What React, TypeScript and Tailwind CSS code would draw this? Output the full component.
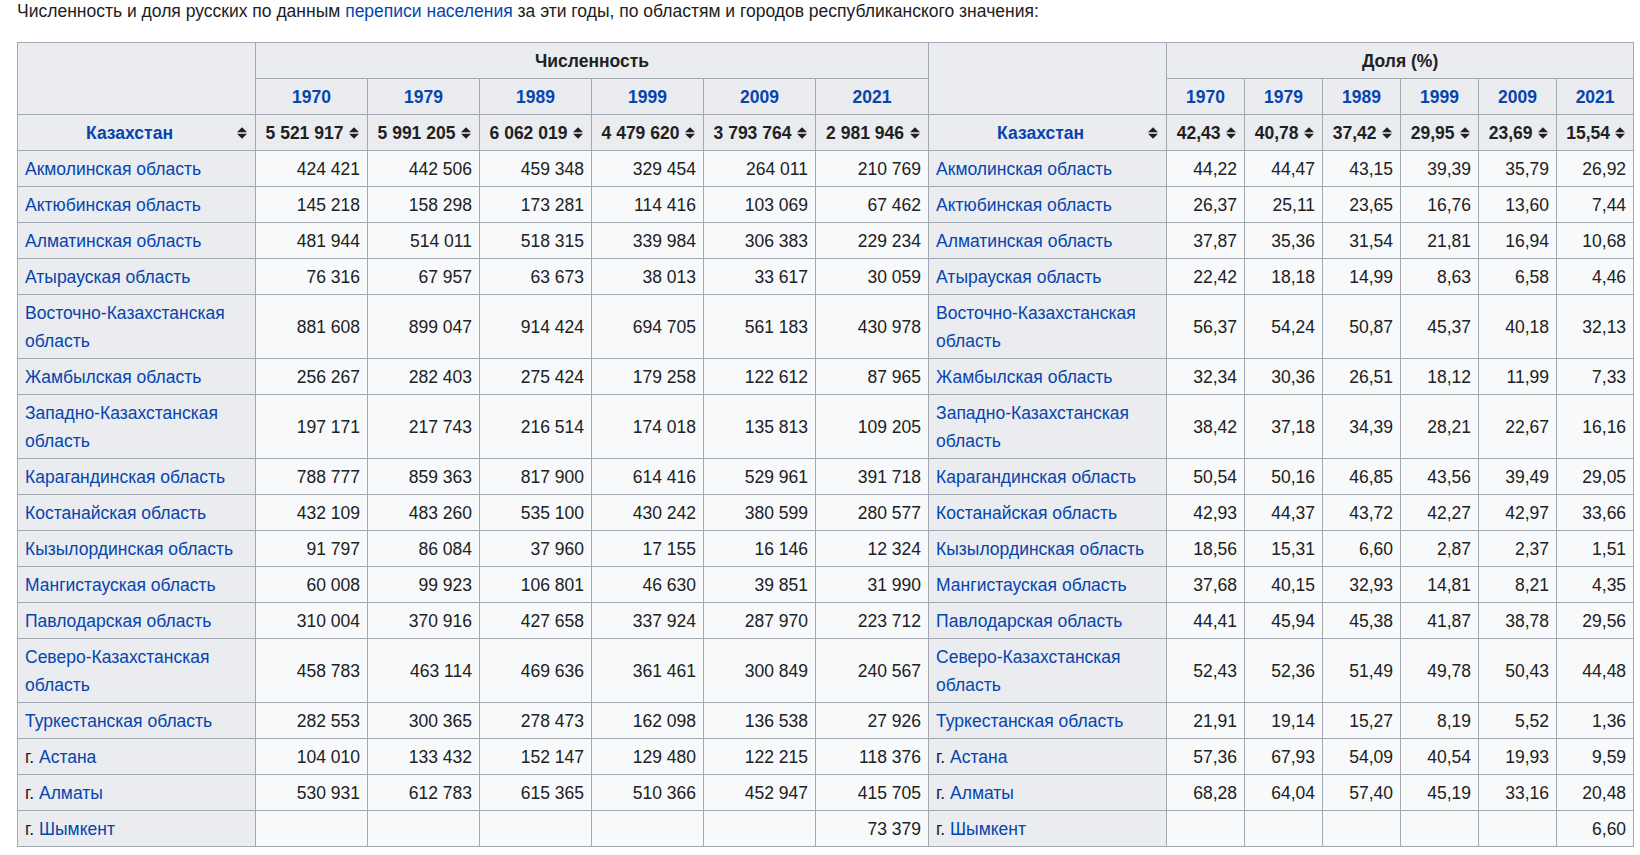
const YEARS = ['1970', '1979', '1989', '1999', '2009', '2021']

const TOTAL_COUNTS = ['5 521 917', '5 991 205', '6 062 019', '4 479 620', '3 793 764', '2 981 946']
const TOTAL_SHARES = ['42,43', '40,78', '37,42', '29,95', '23,69', '15,54']

// column widths, px: name, 6 counts, name, 6 shares
const COUNT_COLS = ['w-[112px]', 'w-[112px]', 'w-[112px]', 'w-[112px]', 'w-[112px]', 'w-[113px]']
const SHARE_COLS = ['w-[78px]', 'w-[78px]', 'w-[78px]', 'w-[78px]', 'w-[78px]', 'w-[77px]']

type Region = {
  prefix?: string
  name: string
  counts: string[]
  shares: string[]
}

const REGIONS: Region[] = [
  { name: 'Акмолинская область', counts: ['424 421', '442 506', '459 348', '329 454', '264 011', '210 769'], shares: ['44,22', '44,47', '43,15', '39,39', '35,79', '26,92'] },
  { name: 'Актюбинская область', counts: ['145 218', '158 298', '173 281', '114 416', '103 069', '67 462'], shares: ['26,37', '25,11', '23,65', '16,76', '13,60', '7,44'] },
  { name: 'Алматинская область', counts: ['481 944', '514 011', '518 315', '339 984', '306 383', '229 234'], shares: ['37,87', '35,36', '31,54', '21,81', '16,94', '10,68'] },
  { name: 'Атырауская область', counts: ['76 316', '67 957', '63 673', '38 013', '33 617', '30 059'], shares: ['22,42', '18,18', '14,99', '8,63', '6,58', '4,46'] },
  { name: 'Восточно-Казахстанская область', counts: ['881 608', '899 047', '914 424', '694 705', '561 183', '430 978'], shares: ['56,37', '54,24', '50,87', '45,37', '40,18', '32,13'] },
  { name: 'Жамбылская область', counts: ['256 267', '282 403', '275 424', '179 258', '122 612', '87 965'], shares: ['32,34', '30,36', '26,51', '18,12', '11,99', '7,33'] },
  { name: 'Западно-Казахстанская область', counts: ['197 171', '217 743', '216 514', '174 018', '135 813', '109 205'], shares: ['38,42', '37,18', '34,39', '28,21', '22,67', '16,16'] },
  { name: 'Карагандинская область', counts: ['788 777', '859 363', '817 900', '614 416', '529 961', '391 718'], shares: ['50,54', '50,16', '46,85', '43,56', '39,49', '29,05'] },
  { name: 'Костанайская область', counts: ['432 109', '483 260', '535 100', '430 242', '380 599', '280 577'], shares: ['42,93', '44,37', '43,72', '42,27', '42,97', '33,66'] },
  { name: 'Кызылординская область', counts: ['91 797', '86 084', '37 960', '17 155', '16 146', '12 324'], shares: ['18,56', '15,31', '6,60', '2,87', '2,37', '1,51'] },
  { name: 'Мангистауская область', counts: ['60 008', '99 923', '106 801', '46 630', '39 851', '31 990'], shares: ['37,68', '40,15', '32,93', '14,81', '8,21', '4,35'] },
  { name: 'Павлодарская область', counts: ['310 004', '370 916', '427 658', '337 924', '287 970', '223 712'], shares: ['44,41', '45,94', '45,38', '41,87', '38,78', '29,56'] },
  { name: 'Северо-Казахстанская область', counts: ['458 783', '463 114', '469 636', '361 461', '300 849', '240 567'], shares: ['52,43', '52,36', '51,49', '49,78', '50,43', '44,48'] },
  { name: 'Туркестанская область', counts: ['282 553', '300 365', '278 473', '162 098', '136 538', '27 926'], shares: ['21,91', '19,14', '15,27', '8,19', '5,52', '1,36'] },
  { prefix: 'г. ', name: 'Астана', counts: ['104 010', '133 432', '152 147', '129 480', '122 215', '118 376'], shares: ['57,36', '67,93', '54,09', '40,54', '19,93', '9,59'] },
  { prefix: 'г. ', name: 'Алматы', counts: ['530 931', '612 783', '615 365', '510 366', '452 947', '415 705'], shares: ['68,28', '64,04', '57,40', '45,19', '33,16', '20,48'] },
  { prefix: 'г. ', name: 'Шымкент', counts: ['', '', '', '', '', '73 379'], shares: ['', '', '', '', '', '6,60'] }
]

// thousands separator is a non-breaking space in the source data
const nb = (value: string) => value.replace(/ /g, '\u00a0')

const CELL = 'border border-[#a2a9b1] px-[7px] py-[3.5px] leading-[28px]'
const HEAD = `${CELL} bg-[#eaecf0] font-bold text-center`

function SortIcon () {
  return (
    <svg width="10" height="12" viewBox="0 0 10 12" className="shrink-0">
      <polygon points="0,5.3 5,0.3 10,5.3" fill="#202122" />
      <polygon points="0,6.7 5,11.7 10,6.7" fill="#202122" />
    </svg>
  )
}

function SortHeader ({ children, link = false }: { children: string, link?: boolean }) {
  return (
    <th className="border border-[#a2a9b1] bg-[#eaecf0] py-[3.5px] pl-[7px] pr-[8px] font-bold leading-[28px]">
      <div className="flex items-center">
        <span className={`flex-1 whitespace-nowrap text-center ${link ? 'text-[#0645ad]' : ''}`}>
          {nb(children)}
        </span>
        <span className="ml-[3px] flex">
          <SortIcon />
        </span>
      </div>
    </th>
  )
}

function RegionName ({ region }: { region: Region }) {
  return (
    <th className={`${CELL} bg-[#eaecf0] text-left font-normal`}>
      {region.prefix}
      <span className="text-[#0645ad]">{region.name}</span>
    </th>
  )
}

function ValueCell ({ value }: { value: string }) {
  return (
    <td className={`${CELL} bg-[#f8f9fa] text-right`}>
      {nb(value)}
    </td>
  )
}

export default function App () {
  return (
    <div className="min-h-[855px] bg-white pl-[17px] font-['Liberation_Sans',Arial,sans-serif] text-[17.5px] text-[#202122]">
      <p className="mb-[20px] leading-[22px]">
        Численность и доля русских по данным{' '}
        <span className="text-[#0645ad]">переписи населения</span>
        {' '}за эти годы, по областям и городов республиканского значения:
      </p>

      <table className="w-[1617px] table-fixed border-collapse">
        <colgroup>
          <col className="w-[238px]" />
          {COUNT_COLS.map((w, i) => <col key={`c${i}`} className={w} />)}
          <col className="w-[238px]" />
          {SHARE_COLS.map((w, i) => <col key={`s${i}`} className={w} />)}
        </colgroup>
        <thead>
          <tr>
            <th rowSpan={2} className={HEAD} />
            <th colSpan={6} className={HEAD}>Численность</th>
            <th rowSpan={2} className={HEAD} />
            <th colSpan={6} className={HEAD}>Доля (%)</th>
          </tr>
          <tr>
            {YEARS.map(y => <th key={`a${y}`} className={`${HEAD} text-[#0645ad]`}>{y}</th>)}
            {YEARS.map(y => <th key={`b${y}`} className={`${HEAD} text-[#0645ad]`}>{y}</th>)}
          </tr>
          <tr>
            <SortHeader link>Казахстан</SortHeader>
            {TOTAL_COUNTS.map(v => <SortHeader key={v}>{v}</SortHeader>)}
            <SortHeader link>Казахстан</SortHeader>
            {TOTAL_SHARES.map(v => <SortHeader key={v}>{v}</SortHeader>)}
          </tr>
        </thead>
        <tbody>
          {REGIONS.map(region => (
            <tr key={region.name}>
              <RegionName region={region} />
              {region.counts.map((v, i) => <ValueCell key={`c${i}`} value={v} />)}
              <RegionName region={region} />
              {region.shares.map((v, i) => <ValueCell key={`s${i}`} value={v} />)}
            </tr>
          ))}
        </tbody>
      </table>
    </div>
  )
}
